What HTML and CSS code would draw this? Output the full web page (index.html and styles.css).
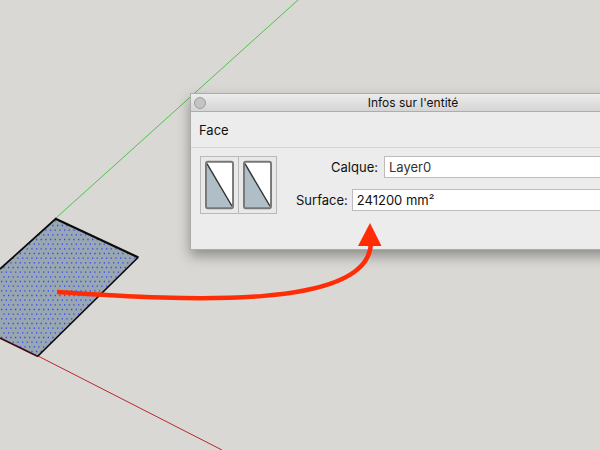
FILE: index.html
```html
<!DOCTYPE html>
<html lang="fr">
<head>
<meta charset="utf-8">
<title>Infos sur l'entité</title>
<link rel="stylesheet" href="styles.css">
</head>
<body>
<main class="workspace">
  <svg class="drawing" width="600" height="450" viewBox="0 0 600 450" aria-hidden="true">
    <defs>
      <pattern id="dots" width="14" height="28" patternUnits="userSpaceOnUse" x="0" y="0">
        <rect width="14" height="28" fill="#98a7b1"/>
        <path d="M1 1.500h1.300M5.700 1.500h1.300M10.300 1.500h1.300M1 10.800h1.300M5.700 10.800h1.300M10.300 10.800h1.300M1 20.200h1.300M5.700 20.200h1.300M10.300 20.200h1.300M3.300 6.200h1.300M8 6.200h1.300M12.600 6.200h1.300M3.300 15.500h1.300M8 15.500h1.300M12.600 15.500h1.300M3.300 24.800h1.300M8 24.800h1.300M12.600 24.800h1.300" stroke="#3346ee" stroke-width="1.300"/>
      </pattern>
    </defs>
    <path d="M56 218 298 0" stroke="#4cc24c" fill="none"/>
    <path d="M38 356 222 450" stroke="#b52a2e" fill="none"/>
    <path d="M-30 296 56 218.500 138 257 38 356 -30 323Z" fill="url(#dots)"/>
    <path d="M0 269 56 218.500M138 257.500 38 356" stroke="#0b0b0b" stroke-width="1.700" fill="none"/>
    <path d="M55 218.500 138.500 257.500" stroke="#0b0b0b" stroke-width="2.200" fill="none"/>
    <path d="M0 338 38 356.500" stroke="#3d0c10" stroke-width="1.800" fill="none"/>
  </svg>

  <section class="panel" aria-labelledby="panel-title">
    <header class="titlebar">
      <button class="close" type="button" aria-label="Fermer"></button>
      <h1 class="title" id="panel-title">Infos sur l'entité</h1>
    </header>
    <p class="kind">Face</p>
    <form class="content">
      <div class="materials">
        <button class="swatch" type="button" aria-label="Matière recto">
          <svg width="30" height="50" viewBox="0 0 30 50"><rect x="1" y="1" width="28" height="48" rx="2" fill="#fff"/><path d="M1 2 28 49H1Z" fill="#b0bec7"/><path d="M2 3 28 47" stroke="#333" stroke-width="1.500"/><rect x="1" y="1" width="28" height="48" rx="2" fill="none" stroke="#777" stroke-width="2"/></svg>
        </button>
        <button class="swatch" type="button" aria-label="Matière verso">
          <svg width="30" height="50" viewBox="0 0 30 50"><rect x="1" y="1" width="28" height="48" rx="2" fill="#fff"/><path d="M1 2 28 49H1Z" fill="#b0bec7"/><path d="M2 3 28 47" stroke="#333" stroke-width="1.500"/><rect x="1" y="1" width="28" height="48" rx="2" fill="none" stroke="#777" stroke-width="2"/></svg>
        </button>
      </div>
      <div class="fields">
        <div class="row row-layer">
          <label for="layer">Calque:</label>
          <input class="field layer" id="layer" type="text" value="Layer0">
        </div>
        <div class="row">
          <label for="area">Surface:</label>
          <input class="field" id="area" type="text" value="241200 mm²">
        </div>
      </div>
    </form>
  </section>

  <svg class="drawing" width="600" height="450" viewBox="0 0 600 450" aria-hidden="true">
    <path d="M57 292C190 301 371 310 371 242" fill="none" stroke="#ff2c06" stroke-width="4.500"/>
    <path d="M370 223 381.500 246H358Z" fill="#ff2c06"/>
  </svg>
</main>
</body>
</html>
```
FILE: styles.css
```css
* {
  box-sizing: border-box;
}

body {
  margin: 0;
  background: #d9d8d4;
  color: #111;
  font: 13px/16px Inter, "Liberation Sans", sans-serif;
}

.workspace {
  position: relative;
  min-height: 100vh;
  overflow: hidden;
}

.drawing {
  position: absolute;
  top: 0;
  left: 0;
  pointer-events: none;
}

.panel {
  position: absolute;
  top: 93px;
  left: 190px;
  right: -36px;
  padding-bottom: 35px;
  background: #ececec;
  border: 1px solid #acacaa;
  box-shadow: 0 6px 12px rgba(0, 0, 0, 0.35);
}

.titlebar {
  display: grid;
  grid-template-columns: 12px 1fr 12px;
  align-items: center;
  height: 18px;
  padding: 0 3px;
  background: linear-gradient(#ececec, #d5d5d5);
  border-bottom: 1px solid #adadad;
}

.close {
  width: 12px;
  height: 12px;
  padding: 0;
  background: #c4c4c4;
  border: 1px solid #9d9d9d;
  border-radius: 50%;
}

.title {
  margin: 0;
  font-size: 12px;
  font-weight: 400;
  line-height: 16px;
  text-align: center;
}

.kind {
  margin: 0;
  padding: 10px 8px 9px;
  border-bottom: 1px solid #d4d4d4;
}

.content {
  display: flex;
  gap: 19px;
  padding: 8px 0 0 9px;
}

.materials {
  display: flex;
  flex: none;
}

.swatch {
  display: flex;
  width: 39px;
  height: 58px;
  padding: 3px 4px;
  background: #e9e9e9;
  border: 1px solid #b9b9b9;
}

.swatch + .swatch {
  margin-left: -1px;
}

.fields {
  display: grid;
  flex: 1;
  gap: 11px;
  align-content: start;
}

.row {
  display: flex;
  gap: 4px;
  align-items: center;
}

.row-layer {
  gap: 6px;
}

.row-layer label {
  width: 82px;
  text-align: right;
}

.field {
  flex: 1;
  min-width: 0;
  height: 22px;
  padding: 0 4px;
  background: #fff;
  border: 1px solid #bcbcbc;
  border-radius: 0;
  color: #111;
  font: inherit;
}

.layer {
  color: #333;
}
```
